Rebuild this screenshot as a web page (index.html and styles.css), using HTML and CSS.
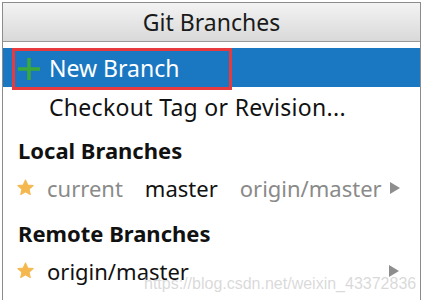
FILE: index.html
```html
<!DOCTYPE html>
<html lang="en">
<head>
  <meta charset="UTF-8">
  <title>Git Branches</title>
  <link rel="stylesheet" href="styles.css">
</head>
<body>
  <div class="popup">
    <div class="title">Git Branches</div>

    <div class="list">
      <!-- acao selecionada -->
      <div class="row selected">
        <span class="icon">
          <svg width="24" height="24" viewBox="0 0 24 24"><path d="M12 1v22M1 12h22" stroke="#3aa83a" stroke-width="3.5"/></svg>
        </span>
        <span>New Branch</span>
        <div class="mark"></div>
      </div>
      <div class="row">
        <span class="icon"></span>
        <span class="long">Checkout Tag or Revision...</span>
      </div>

      <div class="group first">Local Branches</div>
      <div class="row branch">
        <span class="star">
          <svg width="17" height="17" viewBox="0 0 24 24"><path d="M12 1.5l3.2 7 7.6.8-5.7 5.1 1.6 7.5L12 18l-6.7 3.9 1.6-7.5L1.2 9.3l7.6-.8z" fill="#f5b84f" stroke="#f5b84f" stroke-width="1.5" stroke-linejoin="round"/></svg>
        </span>
        <span class="muted">current</span>
        <span class="name">master</span>
        <span class="muted">origin/master</span>
        <span class="arrow"></span>
      </div>

      <div class="group">Remote Branches</div>
      <div class="row branch">
        <span class="star">
          <svg width="17" height="17" viewBox="0 0 24 24"><path d="M12 1.5l3.2 7 7.6.8-5.7 5.1 1.6 7.5L12 18l-6.7 3.9 1.6-7.5L1.2 9.3l7.6-.8z" fill="#f5b84f" stroke="#f5b84f" stroke-width="1.5" stroke-linejoin="round"/></svg>
        </span>
        <span>origin/master</span>
        <span class="spacer"></span>
        <span class="arrow last"></span>
      </div>
    </div>

    <div class="watermark">https://blog.csdn.net/weixin_43372836</div>
  </div>
</body>
</html>
```

FILE: styles.css
```css
body {
  margin: 0;
  background: #fff;
  font-family: 'Noto Sans', 'Open Sans', sans-serif;
  color: #111;
  height: 300px;
  overflow: hidden;
}
.popup {
  position: relative;
  margin: 2px 3px 0 2px;
  height: 298px;
  border: 1px solid #8c8c8c;
  border-bottom: none;
  box-sizing: border-box;
}
.title {
  height: 38px;
  line-height: 38px;
  text-align: center;
  font-size: 23px;
  color: #1a1a1a;
  background: linear-gradient(#f3f3f3, #d9d9d9);
  border-bottom: 1px solid #9a9a9a;
}
.list {
  padding-top: 6px;
}
.row {
  display: flex;
  align-items: center;
  height: 39px;
  padding-left: 14px;
  font-size: 23px;
  position: relative;
}
.row.selected {
  background: #1a78c2;
  color: #fff;
}
.icon {
  width: 24px;
  height: 24px;
  margin-right: 8px;
}
.long {
  letter-spacing: 0.3px;
}
/* caixa vermelha em volta do item */
.mark {
  position: absolute;
  left: 9px;
  top: 0;
  width: 220px;
  height: 42px;
  border: 3px solid #e63a3f;
  box-sizing: border-box;
}
.group {
  font-weight: bold;
  font-size: 22px;
  padding: 7px 0 0 15px;
  height: 38px;
  line-height: 38px;
}
.group.first {
  padding-top: 5px;
}
.row.branch {
  height: 38px;
  font-size: 22px;
}
.star {
  display: flex;
  width: 30px;
  margin-left: 0;
  margin-top: -2px;
}
.muted {
  color: #8a8a8a;
}
.name {
  margin: 0 22px;
}
.spacer {
  flex: 1;
}
.arrow {
  width: 0;
  height: 0;
  border-left: 10px solid #8e8e8e;
  border-top: 6px solid transparent;
  border-bottom: 6px solid transparent;
  margin-left: 8px;
}
.arrow.last {
  margin-right: 21px;
}
.watermark {
  position: absolute;
  left: 141px;
  top: 272px;
  font-family: 'Liberation Sans', sans-serif;
  font-size: 16px;
  color: rgba(180, 180, 180, 0.5);
}
```
